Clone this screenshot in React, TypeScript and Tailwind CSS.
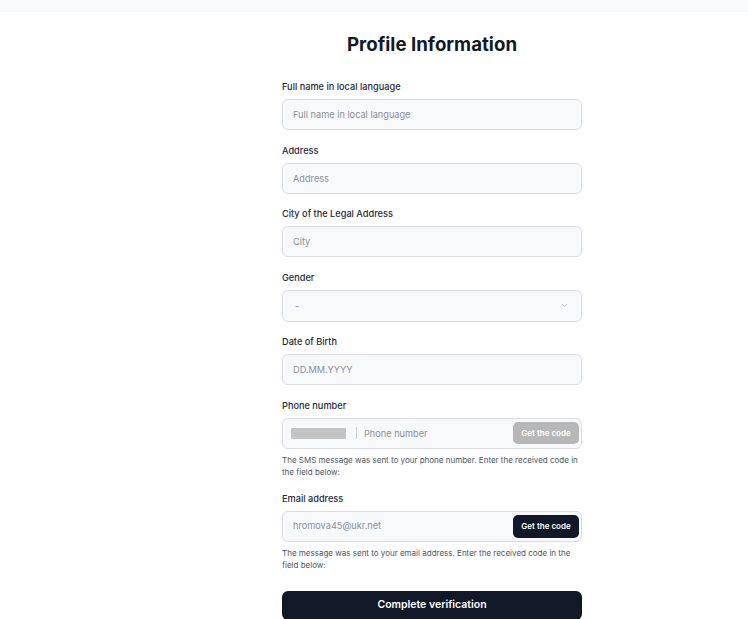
import React from 'react';

const inputCls =
  'w-full h-[31px] px-[10px] rounded-[6px] border border-[#d9dbe0] bg-[#f8f9fb] text-[9.2px] text-[#111827] placeholder:text-[#8a8f98] outline-none';

const Label: React.FC<{ children: React.ReactNode }> = ({ children }) => (
  <label className="block text-[9.2px] leading-[14px] font-medium text-[#1f2937] mb-[5px]">{children}</label>
);

const App: React.FC = () => {
  return (
    <div className="min-h-screen bg-white" style={{ fontFamily: 'Inter, "Liberation Sans", sans-serif' }}>
      <div className="h-[12px] bg-[#f9fafb]" />
      <div className="w-[300px] ml-[282px] pt-[20px]">
        <h1 className="text-center text-[18.7px] leading-[26px] font-bold text-[#111827] mb-[22px]">Profile Information</h1>

        <div className="flex flex-col gap-[13.6px]">
          <div>
            <Label>Full name in local language</Label>
            <input className={inputCls} placeholder="Full name in local language" />
          </div>
          <div>
            <Label>Address</Label>
            <input className={inputCls} placeholder="Address" />
          </div>
          <div>
            <Label>City of the Legal Address</Label>
            <input className={inputCls} placeholder="City" />
          </div>
          <div>
            <Label>Gender</Label>
            <div className="flex items-center justify-between h-[32px] px-[12px] rounded-[6px] border border-[#d9dbe0] bg-[#f8f9fb]">
              <span className="text-[9.2px] text-[#8a8f98]">-</span>
              <svg width="9" height="9" viewBox="0 0 24 24" fill="none" stroke="#b8bcc4" strokeWidth="2" strokeLinecap="round" strokeLinejoin="round">
                <path d="m6 9 6 6 6-6" />
              </svg>
            </div>
          </div>
          <div>
            <Label>Date of Birth</Label>
            <input className={inputCls} placeholder="DD.MM.YYYY" />
          </div>
          <div>
            <Label>Phone number</Label>
            <div className="flex items-center h-[31px] pl-[8px] pr-[2px] rounded-[6px] border border-[#d9dbe0] bg-[#f8f9fb]">
              <div className="w-[55px] h-[11px] bg-[#c4c4c4] rounded-[1px]" />
              <div className="w-px h-[12px] bg-[#c9ccd2] ml-[10px] mr-[7px]" />
              <input className="flex-1 min-w-0 bg-transparent text-[9.2px] text-[#111827] placeholder:text-[#8a8f98] outline-none" placeholder="Phone number" />
              <button className="h-[22px] w-[66px] rounded-[5px] bg-[#b7b7b7] text-white text-[8px] font-semibold">Get the code</button>
            </div>
            <p className="mt-[5px] text-[8px] leading-[12px] text-[#4b5563]">
              The SMS message was sent to your phone number. Enter the received code in the field below:
            </p>
          </div>
          <div>
            <Label>Email address</Label>
            <div className="flex items-center h-[31px] pl-[10px] pr-[2px] rounded-[6px] border border-[#d9dbe0] bg-[#f8f9fb]">
              <input className="flex-1 min-w-0 bg-transparent text-[9.2px] text-[#111827] placeholder:text-[#8a8f98] outline-none" placeholder="hromova45@ukr.net" />
              <button className="h-[23px] w-[66px] rounded-[5px] bg-[#111827] text-white text-[8px] font-semibold">Get the code</button>
            </div>
            <p className="mt-[5px] text-[8px] leading-[12px] text-[#4b5563]">
              The message was sent to your email address. Enter the received code in the field below:
            </p>
          </div>
        </div>

        <button className="mt-[20px] w-full h-[29px] rounded-[6px] bg-[#111827] text-white text-[10.5px] font-semibold">
          Complete verification
        </button>
      </div>
    </div>
  );
};

export default App;
